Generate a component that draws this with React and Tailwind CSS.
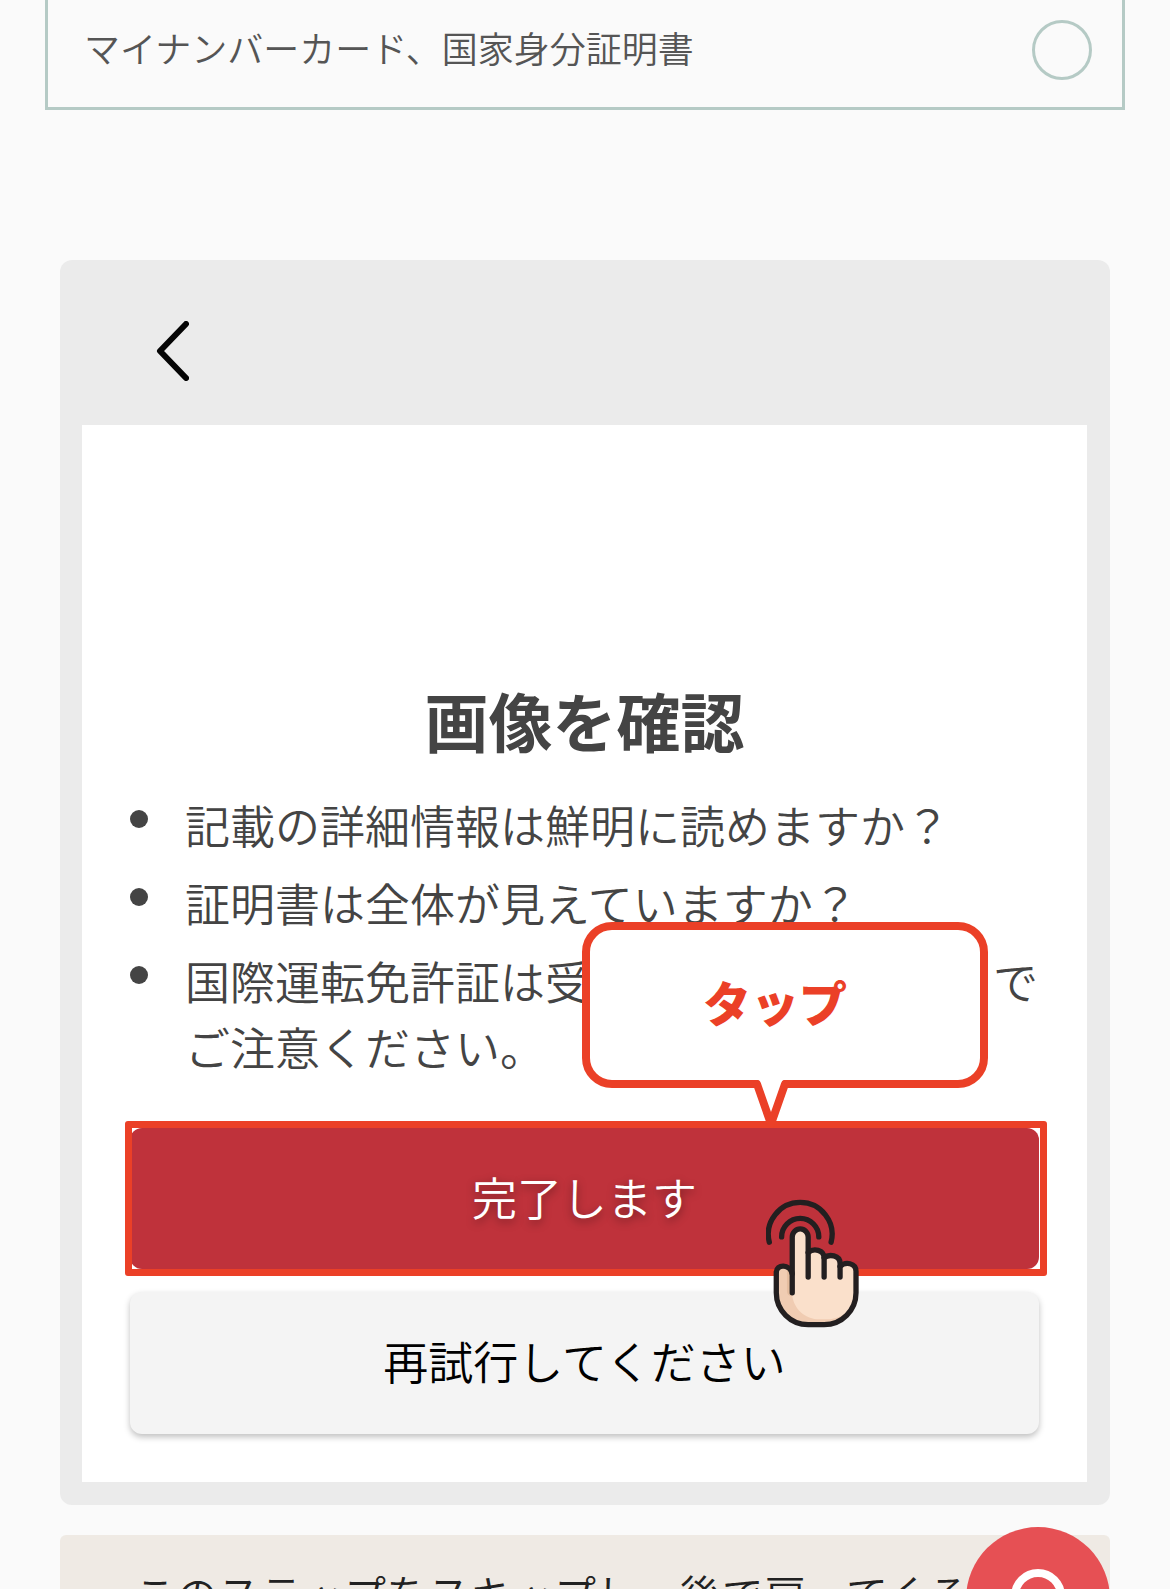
const CHECKS = [
  '記載の詳細情報は鮮明に読めますか？',
  '証明書は全体が見えていますか？',
  <>
    国際運転免許証は受
    <span className="inline-block w-[403px]" />
    でご注意ください。
  </>,
];

function TapHand() {
  return (
    <svg
      viewBox="78 296 280 386"
      className="pointer-events-none absolute top-[71px] right-[180px] z-20 h-[129px] w-[93px]"
      fill="none"
      stroke="#231f20"
      strokeWidth="16"
      strokeLinecap="round"
      strokeLinejoin="round"
      aria-hidden="true"
    >
      <path
        stroke="none"
        fill="#f0ccb2"
        d="M109 577V516C109 490 150 490 157 520V409A24 24 0 0 1 205 409V456C221 442 253 447 253 473C267 460 301 463 301 489C317 482 349 487 349 513V577A96 96 0 0 1 253 673H205A96 96 0 0 1 109 577Z"
      />
      <path stroke="none" fill="#e5bd9f" d="M141 500H157V585H148Q141 582 141 570Z" />
      <path
        stroke="none"
        fill="#fae0cb"
        d="M157 585V409A24 24 0 0 1 205 409V456C221 442 253 447 253 473C267 460 301 463 301 489C317 482 349 487 349 513V577C349 620 310 657 262 657H240C195 657 162 625 157 585Z"
      />
      <path d="M88 425A96 96 0 1 1 274 425" />
      <path d="M125 409A56 56 0 1 1 237 409" />
      <path d="M157 577V409A24 24 0 0 1 205 409V530" />
      <path d="M205 456C221 442 253 447 253 473V530" />
      <path d="M253 472C267 460 301 463 301 489V530" />
      <path d="M301 498C317 482 349 487 349 513V577A96 96 0 0 1 253 673H205A96 96 0 0 1 109 577V516C109 490 150 490 157 520" />
    </svg>
  );
}

function TapBubble() {
  return (
    <div className="absolute right-[51px] bottom-full z-10 mb-10 flex h-[166px] w-[406px] items-center justify-center rounded-[30px] border-8 border-[#eb4027] bg-white pr-5 pb-2 text-5xl font-black text-[#eb4027]">
      タップ
      <svg
        viewBox="0 0 42 48"
        className="absolute top-full left-[160px] h-12 w-[42px]"
        aria-hidden="true"
      >
        <path d="M7 0L21 44L35 0Z" fill="#fff" />
        <path
          d="M7 4L21 44L35 4"
          fill="none"
          stroke="#eb4027"
          strokeWidth="8"
          strokeLinecap="round"
          strokeLinejoin="round"
        />
      </svg>
    </div>
  );
}

export default function App() {
  return (
    <div
      lang="ja"
      className="h-screen overflow-hidden bg-[#fafafa] font-['Noto_Sans_CJK_JP',sans-serif] font-[350] text-[#444]"
    >
      <label className="mx-[45px] flex items-start justify-between border-[3px] border-t-0 border-[#b5cac5] pt-5 pr-[30px] pb-[27px] pl-9 text-4xl leading-[54px] text-[#555]">
        マイナンバーカード、国家身分証明書
        <input
          type="radio"
          name="document"
          className="size-[60px] shrink-0 appearance-none rounded-full border-[3px] border-[#b5cac5]"
        />
      </label>

      <main className="mx-[60px] mt-[150px] rounded-xl bg-[#ebebeb] pr-[23px] pb-[23px] pl-[22px]">
        <header className="flex h-[165px] items-center pt-4 pl-[74px]">
          <button type="button" aria-label="戻る">
            <svg viewBox="0 0 33 60" className="h-[60px] w-[33px]" fill="none" aria-hidden="true">
              <path
                d="M30 3L4 30L30 57"
                stroke="#050505"
                strokeWidth="6"
                strokeLinecap="round"
                strokeLinejoin="round"
              />
            </svg>
          </button>
        </header>

        <section className="bg-white pt-[254px] pb-12">
          <h1 className="text-center text-[64px] leading-[80px] font-bold">画像を確認</h1>
          <ul className="mt-[33px] flex flex-col gap-3 pr-[42px] pl-12 text-[45px] leading-[66px]">
            {CHECKS.map((text, index) => (
              <li key={index} className="flex gap-[37px]">
                <span className="mt-[18px] size-[18px] shrink-0 rounded-full bg-[#444]" />
                <span>{text}</span>
              </li>
            ))}
          </ul>

          <div className="mt-12 flex flex-col gap-[23px] px-12 text-[45px]">
            <div className="relative">
              <button
                type="button"
                className="h-[141px] w-full rounded-xl bg-[#bf323b] pb-1 text-white [text-shadow:0_3px_10px_rgba(0,0,0,0.4)]"
              >
                完了します
              </button>
              <div className="pointer-events-none absolute -inset-y-[7px] -right-2 -left-[5px] rounded-[3px] border-[7px] border-[#eb4027]" />
              <TapBubble />
              <TapHand />
            </div>
            <button
              type="button"
              className="h-[142px] w-full rounded-xl bg-[#f4f4f4] pb-1 text-black shadow-[0_3px_6px_rgba(0,0,0,0.25)]"
            >
              再試行してください
            </button>
          </div>
        </section>
      </main>

      <section className="mx-[60px] mt-[30px] rounded-md bg-[#efeae4] px-[74px] pt-7 pb-10 text-[42px] leading-[60px] text-[#222]">
        <p>このステップをスキップし、後で戻ってくる</p>
      </section>

      <button
        type="button"
        aria-label="サポート"
        className="fixed right-[60px] bottom-[-82px] flex size-36 justify-center rounded-full bg-[#e65054] pt-[42px]"
      >
        <svg viewBox="0 0 54 54" className="size-[54px]" fill="none" aria-hidden="true">
          <circle cx="27" cy="27" r="23" stroke="#fff" strokeWidth="8" />
        </svg>
      </button>
    </div>
  );
}
